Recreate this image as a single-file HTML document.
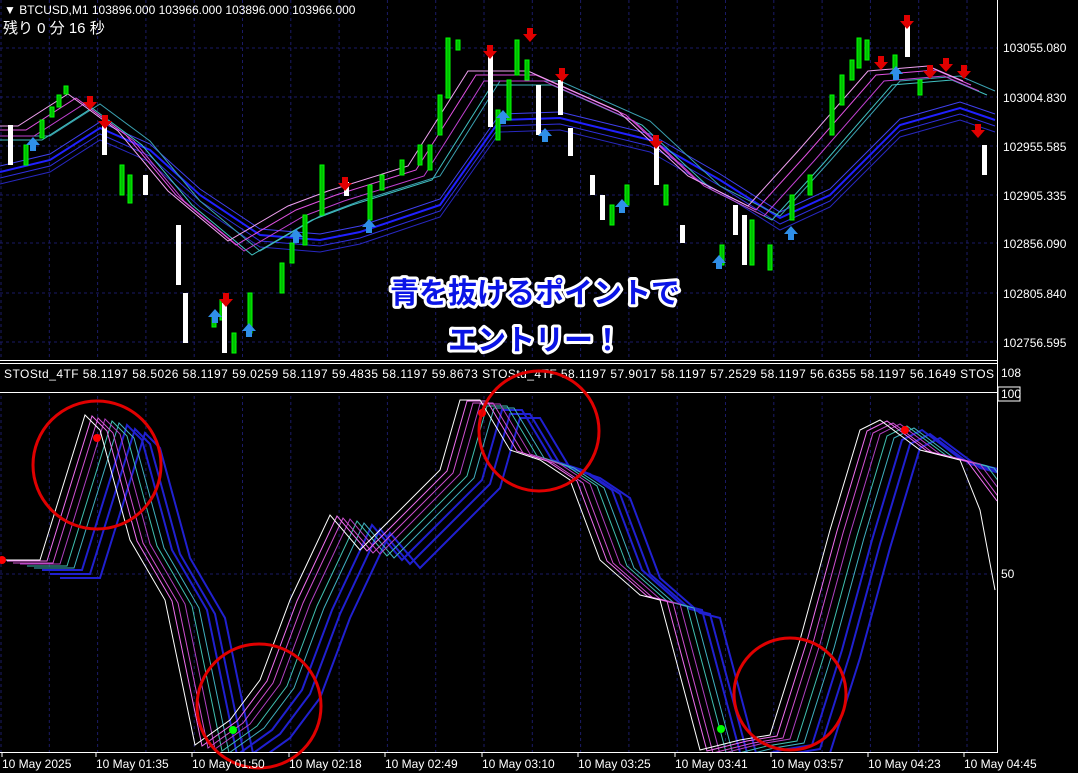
<!DOCTYPE html>
<html><head><meta charset="utf-8"><style>
html,body{margin:0;padding:0;background:#000;width:1078px;height:773px;overflow:hidden}
svg{display:block}
text{font-family:"Liberation Sans","Noto Sans CJK JP",sans-serif}
</style></head><body>
<svg width="1078" height="773" viewBox="0 0 1078 773" xmlns="http://www.w3.org/2000/svg">
<defs>
<pattern id="gv" width="48.3" height="773" patternUnits="userSpaceOnUse" x="0.5">
<line x1="0.5" y1="0" x2="0.5" y2="773" stroke="#1a1a66" stroke-dasharray="3,3"/></pattern>
<clipPath id="ct"><rect x="0" y="0" width="997" height="360"/></clipPath>
<clipPath id="cb"><rect x="0" y="393" width="997" height="359"/></clipPath>
<g id="dn"><polygon points="-3,-7 3,-7 3,-1 7,-1 0,7 -7,-1 -3,-1" fill="#e00000"/></g>
<g id="up"><polygon points="-3,7 3,7 3,1 7,1 0,-7 -7,1 -3,1" fill="#2f8fe8"/></g>
</defs>
<rect width="1078" height="773" fill="#000"/>
<rect x="0" y="0" width="997" height="360" fill="url(#gv)"/>
<rect x="0" y="393" width="997" height="360" fill="url(#gv)"/>
<g stroke="#1a1a66" stroke-dasharray="3,3">
<line x1="0" y1="48" x2="997" y2="48"/><line x1="0" y1="97" x2="997" y2="97"/><line x1="0" y1="146" x2="997" y2="146"/><line x1="0" y1="195" x2="997" y2="195"/><line x1="0" y1="243" x2="997" y2="243"/><line x1="0" y1="293" x2="997" y2="293"/><line x1="0" y1="342" x2="997" y2="342"/>
<line x1="0" y1="574" x2="997" y2="574"/>
</g>
<g stroke="#fff" fill="none">
<line x1="997.5" y1="0" x2="997.5" y2="753"/>
<line x1="0" y1="360.5" x2="998" y2="360.5"/>
<line x1="0" y1="363.5" x2="998" y2="363.5"/>
<line x1="0" y1="392.5" x2="998" y2="392.5"/>
<line x1="0" y1="752.5" x2="998" y2="752.5"/>
</g>
<g fill="none" stroke-width="1" clip-path="url(#ct)">
<polyline stroke="#2020ff" stroke-width="2" points="0,172 50,160 100,128 150,150 200,195 260,235 320,240 360,232 440,205 500,120 560,118 650,140 720,180 780,218 830,195 900,125 960,108 995,120"/>
<polyline stroke="#3030e0" transform="translate(0,6)" points="0,172 50,160 100,128 150,150 200,195 260,235 320,240 360,232 440,205 500,120 560,118 650,140 720,180 780,218 830,195 900,125 960,108 995,120"/>
<polyline stroke="#2828c0" transform="translate(0,12)" points="0,172 50,160 100,128 150,150 200,195 260,235 320,240 360,232 440,205 500,120 560,118 650,140 720,180 780,218 830,195 900,125 960,108 995,120"/>
<polyline stroke="#4040f0" transform="translate(0,-6)" points="0,172 50,160 100,128 150,150 200,195 260,235 320,240 360,232 440,205 500,120 560,118 650,140 720,180 780,218 830,195 900,125 960,108 995,120"/>
<polyline stroke="#3aa0b0" transform="translate(0,-14)" points="0,150 50,150 100,118 150,155 200,215 260,265 320,230 360,215 440,190 500,95 560,95 650,135 720,200 780,230 830,175 900,95 960,90 995,105"/>
<polyline stroke="#40c0c0" transform="translate(-8,-10)" points="0,150 50,150 100,118 150,155 200,215 260,265 320,230 360,215 440,190 500,95 560,95 650,135 720,200 780,230 830,175 900,95 960,90 995,105"/>
<polyline stroke="#c040d0" transform="translate(-16,-14)" points="0,150 50,150 100,118 150,155 200,215 260,265 320,230 360,215 440,190 500,95 560,95 650,135 720,200 780,230 830,175 900,95 960,90 995,105"/>
<polyline stroke="#e050e0" transform="translate(-24,-20)" points="0,150 50,150 100,118 150,155 200,215 260,265 320,230 360,215 440,190 500,95 560,95 650,135 720,200 780,230 830,175 900,95 960,90 995,105"/>
<polyline stroke="#f0a0f0" transform="translate(-32,-24)" points="0,150 50,150 100,118 150,155 200,215 260,265 320,230 360,215 440,190 500,95 560,95 650,135 720,200 780,230 830,175 900,95 960,90 995,105"/>
</g>
<g fill="#00c000" stroke="#00ff00" stroke-width="1">
<rect x="24" y="145" width="4" height="20"/><rect x="40" y="120" width="4" height="18"/><rect x="50" y="107" width="4" height="10"/><rect x="57" y="95" width="4" height="12"/><rect x="64" y="86" width="4" height="8"/>
<rect x="120" y="165" width="4" height="30"/><rect x="128" y="175" width="4" height="28"/>
<rect x="212" y="315" width="4" height="12"/><rect x="220" y="300" width="4" height="20"/><rect x="232" y="333" width="4" height="20"/><rect x="248" y="293" width="4" height="40"/>
<rect x="280" y="263" width="4" height="30"/><rect x="290" y="243" width="4" height="20"/><rect x="303" y="215" width="4" height="30"/><rect x="320" y="165" width="4" height="50"/>
<rect x="368" y="185" width="4" height="35"/><rect x="380" y="175" width="4" height="15"/><rect x="400" y="160" width="4" height="15"/><rect x="418" y="145" width="4" height="20"/><rect x="428" y="145" width="4" height="25"/><rect x="438" y="95" width="4" height="40"/><rect x="446" y="38" width="4" height="60"/><rect x="456" y="40" width="4" height="10"/><rect x="496" y="110" width="4" height="30"/><rect x="507" y="80" width="4" height="40"/><rect x="515" y="40" width="4" height="35"/><rect x="525" y="60" width="4" height="20"/>
<rect x="610" y="205" width="4" height="20"/><rect x="625" y="185" width="4" height="20"/><rect x="664" y="185" width="4" height="20"/><rect x="720" y="245" width="4" height="20"/><rect x="750" y="220" width="4" height="45"/><rect x="768" y="245" width="4" height="25"/><rect x="790" y="195" width="4" height="25"/><rect x="808" y="175" width="4" height="20"/><rect x="830" y="95" width="4" height="40"/><rect x="840" y="75" width="4" height="30"/><rect x="850" y="60" width="4" height="20"/><rect x="857" y="38" width="4" height="30"/><rect x="865" y="40" width="4" height="20"/><rect x="893" y="55" width="4" height="20"/><rect x="918" y="80" width="4" height="15"/>
</g>
<g fill="#fff">
<rect x="8" y="125" width="5" height="40"/><rect x="102" y="125" width="5" height="30"/><rect x="143" y="175" width="5" height="20"/><rect x="176" y="225" width="5" height="60"/><rect x="183" y="293" width="5" height="50"/><rect x="222" y="303" width="5" height="50"/><rect x="344" y="182" width="5" height="14"/><rect x="488" y="55" width="5" height="72"/><rect x="536" y="85" width="5" height="50"/><rect x="558" y="80" width="5" height="35"/><rect x="568" y="128" width="5" height="28"/><rect x="590" y="175" width="5" height="20"/><rect x="600" y="195" width="5" height="25"/><rect x="654" y="143" width="5" height="42"/><rect x="680" y="225" width="5" height="18"/><rect x="733" y="205" width="5" height="30"/><rect x="742" y="215" width="5" height="50"/><rect x="905" y="25" width="5" height="32"/><rect x="982" y="145" width="5" height="30"/>
</g>
<use href="#dn" x="90" y="103"/><use href="#dn" x="105" y="122"/><use href="#dn" x="226" y="300"/><use href="#dn" x="345" y="184"/><use href="#dn" x="490" y="52"/><use href="#dn" x="530" y="35"/><use href="#dn" x="562" y="75"/><use href="#dn" x="656" y="142"/><use href="#dn" x="881" y="63"/><use href="#dn" x="907" y="22"/><use href="#dn" x="930" y="72"/><use href="#dn" x="946" y="65"/><use href="#dn" x="964" y="72"/><use href="#dn" x="978" y="131"/>
<use href="#up" x="33" y="144"/><use href="#up" x="215" y="316"/><use href="#up" x="249" y="330"/><use href="#up" x="296" y="236"/><use href="#up" x="369" y="226"/><use href="#up" x="503" y="117"/><use href="#up" x="545" y="135"/><use href="#up" x="622" y="206"/><use href="#up" x="719" y="262"/><use href="#up" x="791" y="233"/><use href="#up" x="896" y="73"/>
<text x="4" y="14" fill="#fff" font-size="12">▼ BTCUSD,M1  103896.000 103966.000 103896.000 103966.000</text>
<text x="3" y="33" fill="#fff" font-size="15" font-family="Liberation Mono,'Noto Sans CJK JP',monospace">残り 0 分 16 秒</text>
<g fill="#fff" font-size="12">
<text x="1003" y="52">103055.080</text><text x="1003" y="102">103004.830</text><text x="1003" y="151">102955.585</text><text x="1003" y="200">102905.335</text><text x="1003" y="248">102856.090</text><text x="1003" y="298">102805.840</text><text x="1003" y="347">102756.595</text>
<text x="1001" y="377">108</text><text x="1001" y="398">100</text><text x="1001" y="578">50</text>
</g>
<rect x="998" y="387" width="22" height="14" fill="none" stroke="#fff"/>
<text x="4" y="378" fill="#fff" font-size="12" textLength="990">STOStd_4TF 58.1197 58.5026 58.1197 59.0259 58.1197 59.4835 58.1197 59.8673  STOStd_4TF 58.1197 57.9017 58.1197 57.2529 58.1197 56.6355 58.1197 56.1649  STOS</text>
<g font-size="29" font-weight="bold" font-family="'Noto Sans CJK JP',sans-serif" text-anchor="middle" stroke="#fff" stroke-width="6" paint-order="stroke" fill="#0a14e6" stroke-linejoin="round">
<text x="535" y="303">青を抜けるポイントで</text>
<text x="535" y="350">エントリー！</text>
</g>
<g fill="none" clip-path="url(#cb)">
<g stroke="#2020d0" stroke-width="2">
<polyline transform="translate(60,18)" points="0,560 40,560 85,415 100,430 130,540 165,600 195,745 230,720 260,680 290,600 330,515 360,550 390,520 440,470 460,400 480,400 510,450 540,460 570,480 600,560 640,595 660,600 700,750 740,740 770,735 800,640 830,530 860,430 880,420 920,450 960,460"/>
<polyline transform="translate(50,14)" points="0,560 40,560 85,415 100,430 130,540 165,600 195,745 230,720 260,680 290,600 330,515 360,550 390,520 440,470 460,400 480,400 510,450 540,460 570,480 600,560 640,595 660,600 700,750 740,740 770,735 800,640 830,530 860,430 880,420 920,450 960,460"/>
<polyline transform="translate(42,10)" points="0,560 40,560 85,415 100,430 130,540 165,600 195,745 230,720 260,680 290,600 330,515 360,550 390,520 440,470 460,400 480,400 510,450 540,460 570,480 600,560 640,595 660,600 700,750 740,740 770,735 800,640 830,530 860,430 880,420 920,450 960,460"/>
</g>
<g stroke-width="1">
<polyline stroke="#40b0c0" transform="translate(34,8)" points="0,560 40,560 85,415 100,430 130,540 165,600 195,745 230,720 260,680 290,600 330,515 360,550 390,520 440,470 460,400 480,400 510,450 540,460 570,480 600,560 640,595 660,600 700,750 740,740 770,735 800,640 830,530 860,430 880,420 920,450 960,460 990,500"/>
<polyline stroke="#40c0b0" transform="translate(27,6)" points="0,560 40,560 85,415 100,430 130,540 165,600 195,745 230,720 260,680 290,600 330,515 360,550 390,520 440,470 460,400 480,400 510,450 540,460 570,480 600,560 640,595 660,600 700,750 740,740 770,735 800,640 830,530 860,430 880,420 920,450 960,460 990,500"/>
<polyline stroke="#b040c0" transform="translate(20,4)" points="0,560 40,560 85,415 100,430 130,540 165,600 195,745 230,720 260,680 290,600 330,515 360,550 390,520 440,470 460,400 480,400 510,450 540,460 570,480 600,560 640,595 660,600 700,750 740,740 770,735 800,640 830,530 860,430 880,420 920,450 960,460 990,500"/>
<polyline stroke="#d050d0" transform="translate(13,3)" points="0,560 40,560 85,415 100,430 130,540 165,600 195,745 230,720 260,680 290,600 330,515 360,550 390,520 440,470 460,400 480,400 510,450 540,460 570,480 600,560 640,595 660,600 700,750 740,740 770,735 800,640 830,530 860,430 880,420 920,450 960,460 990,500"/>
<polyline stroke="#f070f0" transform="translate(7,1)" points="0,560 40,560 85,415 100,430 130,540 165,600 195,745 230,720 260,680 290,600 330,515 360,550 390,520 440,470 460,400 480,400 510,450 540,460 570,480 600,560 640,595 660,600 700,750 740,740 770,735 800,640 830,530 860,430 880,420 920,450 960,460 990,500"/>
<polyline stroke="#fff" points="0,560 40,560 85,415 100,430 130,540 165,600 195,745 230,720 260,680 290,600 330,515 360,550 390,520 440,470 460,400 480,400 510,450 540,460 570,480 600,560 640,595 660,600 700,750 740,740 770,735 800,640 830,530 860,430 880,420 920,450 960,460 980,510 995,590"/>
</g>
</g>
<circle cx="97" cy="438" r="4" fill="#f00"/><circle cx="482" cy="413" r="4" fill="#f00"/><circle cx="905" cy="430" r="4" fill="#f00"/><circle cx="2" cy="560" r="4" fill="#f00"/>
<circle cx="233" cy="730" r="4" fill="#0f0"/><circle cx="721" cy="729" r="4" fill="#0f0"/>
<g fill="none" stroke="#e00000" stroke-width="3">
<circle cx="97" cy="465" r="64"/><circle cx="539" cy="431" r="60"/><circle cx="259" cy="706" r="62"/><circle cx="790" cy="694" r="56"/>
</g>
<g fill="#fff" font-size="12">
<text x="2" y="768">10 May 2025</text><text x="96" y="768">10 May 01:35</text><text x="192" y="768">10 May 01:50</text><text x="289" y="768">10 May 02:18</text><text x="385" y="768">10 May 02:49</text><text x="482" y="768">10 May 03:10</text><text x="578" y="768">10 May 03:25</text><text x="675" y="768">10 May 03:41</text><text x="771" y="768">10 May 03:57</text><text x="868" y="768">10 May 04:23</text><text x="964" y="768">10 May 04:45</text>
</g>
<g stroke="#fff"><line x1="2" y1="753" x2="2" y2="757"/><line x1="96" y1="753" x2="96" y2="757"/><line x1="192" y1="753" x2="192" y2="757"/><line x1="289" y1="753" x2="289" y2="757"/><line x1="385" y1="753" x2="385" y2="757"/><line x1="482" y1="753" x2="482" y2="757"/><line x1="578" y1="753" x2="578" y2="757"/><line x1="675" y1="753" x2="675" y2="757"/><line x1="771" y1="753" x2="771" y2="757"/><line x1="868" y1="753" x2="868" y2="757"/><line x1="964" y1="753" x2="964" y2="757"/></g>
</svg>
</body></html>
